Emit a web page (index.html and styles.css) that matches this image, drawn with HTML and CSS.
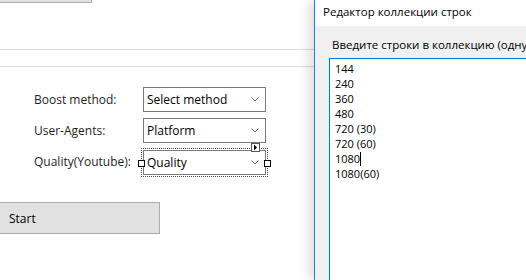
FILE: index.html
```html
<!DOCTYPE html>
<html>

<head>
  <title>Form designer</title>
  <link rel="stylesheet" href="styles.css">
</head>

<body>
  <div id="desktop">
    <div id="designer">
      <div class="top-button"></div>
      <div class="separator"></div>

      <div class="fields">
        <label class="field-label">Boost method:</label>
        <div class="combo">
          <span>Select method</span>
          <svg class="chevron" width="8" height="5" viewBox="0 0 8 5"><path d="M0.5 0.5 L4 4 L7.5 0.5" fill="none" stroke="#707070" stroke-width="1"/></svg>
        </div>

        <label class="field-label">User-Agents:</label>
        <div class="combo">
          <span>Platform</span>
          <svg class="chevron" width="8" height="5" viewBox="0 0 8 5"><path d="M0.5 0.5 L4 4 L7.5 0.5" fill="none" stroke="#707070" stroke-width="1"/></svg>
        </div>

        <label class="field-label">Quality(Youtube):</label>
        <div class="combo selected">
          <span>Quality</span>
          <svg class="chevron" width="8" height="5" viewBox="0 0 8 5"><path d="M0.5 0.5 L4 4 L7.5 0.5" fill="none" stroke="#707070" stroke-width="1"/></svg>
          <!-- designer adornments -->
          <div class="select-frame"></div>
          <div class="handle handle-left"></div>
          <div class="handle handle-right"></div>
          <div class="smart-tag">
            <svg width="5" height="7" viewBox="0 0 5 7"><path d="M1 0.5 L4 3.5 L1 6.5 Z" fill="#000"/></svg>
          </div>
        </div>
      </div>

      <button class="start-button">Start</button>
    </div>

    <div id="collection-editor">
      <div class="editor-title">Редактор коллекции строк</div>
      <div class="editor-body">
        <div class="editor-hint">Введите строки в коллекцию (одну</div>
        <div class="editor-text">
          <div>144</div>
          <div>240</div>
          <div>360</div>
          <div>480</div>
          <div>720 (30)</div>
          <div>720 (60)</div>
          <div>1080<span class="caret"></span></div>
          <div>1080(60)</div>
        </div>
      </div>
    </div>
  </div>
</body>

</html>
```

FILE: styles.css
```css
body {
  margin: 0;
  background-color: #fff;
  font-family: "Open Sans", "Noto Sans", sans-serif;
  font-size: 12px;
  color: #000;
}

#desktop {
  display: flex;
  width: 526px;
  height: 280px;
  overflow: hidden;
}

/* left: the form in the designer */
#designer {
  width: 314px;
  flex-shrink: 0;
  background-color: #fff;
}

.top-button {
  width: 91px;
  height: 2px;
  background-color: #e1e1e1;
  border: 1px solid #adadad;
  border-top: none;
  border-left: none;
}

.separator {
  margin-top: 46px;
  height: 16px;
  border-top: 1px solid #dadada;
  border-bottom: 1px solid #dadada;
}

.fields {
  display: grid;
  grid-template-columns: 109px 123px;
  grid-auto-rows: 25px;
  row-gap: 6px;
  margin: 20px 0 0 34px;
}

.field-label {
  display: flex;
  align-items: center;
  color: #1e1e1e;
  white-space: nowrap;
}

.fields .combo:nth-of-type(3) {
  margin-top: 1px;
}

.combo {
  position: relative;
  display: flex;
  align-items: center;
  justify-content: space-between;
  box-sizing: border-box;
  height: 25px;
  padding: 0 6px 0 3px;
  border: 1px solid #7a7a7a;
  background-color: #fff;
}

.chevron {
  display: block;
}

.select-frame {
  position: absolute;
  top: -3px;
  left: -3px;
  right: -3px;
  bottom: -3px;
  border: 1px dotted #444;
  pointer-events: none;
}

.handle {
  position: absolute;
  top: 9px;
  width: 5px;
  height: 5px;
  border: 1px solid #000;
  background-color: #fff;
}

.handle-left {
  left: -6px;
}

.handle-right {
  right: -6px;
}

.smart-tag {
  position: absolute;
  top: -8px;
  right: 5px;
  width: 7px;
  height: 7px;
  border: 1px solid #555;
  background-color: #fff;
  display: flex;
  align-items: center;
  justify-content: center;
}

.start-button {
  display: block;
  margin-top: 28px;
  width: 160px;
  height: 32px;
  padding: 0 0 0 9px;
  text-align: left;
  font-family: inherit;
  font-size: 12px;
  color: #000;
  background-color: #e1e1e1;
  border: 1px solid #adadad;
  border-left: none;
}

/* right: string collection editor window */
#collection-editor {
  flex: 1;
  display: flex;
  flex-direction: column;
  border-left: 1px solid #1883d7;
  box-shadow: -6px 0 10px rgba(0, 0, 0, 0.12);
  background-color: #f0f0f0;
  white-space: nowrap;
  font-size: 11.5px;
}

.editor-title {
  height: 26px;
  line-height: 24px;
  padding-left: 8px;
  background-color: #fff;
}

.editor-body {
  flex: 1;
  display: flex;
  flex-direction: column;
  padding-left: 14px;
}

.editor-hint {
  margin-top: 11px;
  line-height: 16px;
  padding-left: 3px;
}

.editor-text {
  flex: 1;
  margin-top: 5px;
  padding: 2px 0 0 5px;
  background-color: #fff;
  border-top: 1px solid #0078d7;
  border-left: 1px solid #0078d7;
  font-size: 11px;
  line-height: 15px;
}

.caret {
  display: inline-block;
  width: 1px;
  height: 14px;
  background-color: #000;
  vertical-align: -3px;
}
```
